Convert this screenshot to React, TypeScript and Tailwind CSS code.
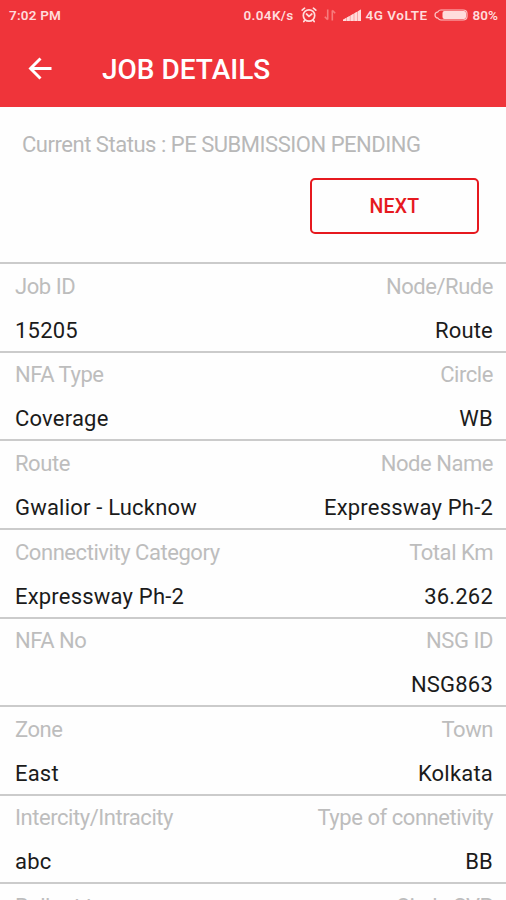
interface Field {
  label: string;
  value: string;
}

const rows: [Field, Field][] = [
  [{ label: 'Job ID', value: '15205' }, { label: 'Node/Rude', value: 'Route' }],
  [{ label: 'NFA Type', value: 'Coverage' }, { label: 'Circle', value: 'WB' }],
  [{ label: 'Route', value: 'Gwalior - Lucknow' }, { label: 'Node Name', value: 'Expressway Ph-2' }],
  [{ label: 'Connectivity Category', value: 'Expressway Ph-2' }, { label: 'Total Km', value: '36.262' }],
  [{ label: 'NFA No', value: '' }, { label: 'NSG ID', value: 'NSG863' }],
  [{ label: 'Zone', value: 'East' }, { label: 'Town', value: 'Kolkata' }],
  [{ label: 'Intercity/Intracity', value: 'abc' }, { label: 'Type of connetivity', value: 'BB' }],
  [{ label: 'Rollout type', value: '' }, { label: 'Circle SVP', value: '' }],
];

function StatusBar() {
  return (
    <div className="flex h-[30px] items-center pl-[9px] pr-2 text-[13.5px] font-semibold text-[#ffdcdc]">
      <span className="flex-1 tracking-[0.2px]">7:02 PM</span>
      <span className="tracking-[0.35px]">0.04K/s</span>
      {/* alarm */}
      <svg className="ml-[7px] h-4 w-4" viewBox="0 0 16 16" fill="none" stroke="currentColor" strokeWidth="1.7" strokeLinecap="round">
        <circle cx="8" cy="8.5" r="5.7" />
        <path d="M1.2 3.2 3.6 1.2M14.8 3.2 12.4 1.2M5.5 7 8 9.3 10.8 7M3.8 13.2 2.8 14.6M12.2 13.2 13.2 14.6" />
      </svg>
      {/* data arrows */}
      <svg className="ml-[7px] h-3 w-3 text-[#f77b7c]" viewBox="0 0 12 12" fill="none" stroke="currentColor" strokeWidth="1.6">
        <path d="M3.7 0.5v10M0.8 7.8 3.7 10.7M8.3 11.5v-10M11.2 4.2 8.3 1.3" />
      </svg>
      {/* signal */}
      <svg className="ml-[7px] h-3 w-[18px]" viewBox="0 0 18 12" fill="currentColor">
        <path d="M0 12V10.8L18 0.5V12z" fillOpacity="0.6" />
        <path d="M0 12V10.8L3 9.1v2.9zM3.8 12V8.6L6.8 6.9v5.1zM7.6 12V6.4L10.6 4.7v7.3zM11.4 12V4.3L14.2 2.7V12zM15 12V2.2L18 0.5V12z" />
      </svg>
      <span className="ml-[5px] tracking-[0.5px]">4G VoLTE</span>
      {/* battery */}
      <svg className="ml-1.5 h-3 w-[34px]" viewBox="0 0 34 12" fill="none">
        <path d="M7 1H29Q33 1 33 4.5V7.5Q33 11 29 11H7Q5 11 4 9.2 1 8.8 1 6 1 3.2 4 2.8 5 1 7 1Z" stroke="currentColor" strokeWidth="1.2" strokeOpacity="0.85" />
        <rect x="8.5" y="2" width="23.5" height="8" rx="2" fill="currentColor" />
      </svg>
      <span className="ml-[5px]">80%</span>
    </div>
  );
}

function DetailRow({ left, right }: { left: Field; right: Field }) {
  return (
    <div className="flex h-[88.6px] shrink-0 justify-between border-t-2 border-[#cbcbcb] pl-[15px] pr-[13px] pt-[7.5px] text-[22px] leading-[29px]">
      {[left, right].map((field, i) => (
        <div key={field.label} className={i === 1 ? 'text-right' : ''}>
          <div className="tracking-[-0.45px] text-[#bdbdbd]">{field.label}</div>
          <div className="mt-[15px] tracking-[0.2px] text-[#1b1b1b]">{field.value}</div>
        </div>
      ))}
    </div>
  );
}

export default function App() {
  return (
    <div className="flex h-[900px] w-[506px] flex-col overflow-hidden bg-[#fefefe] font-['Roboto',sans-serif]">
      <header className="h-[107px] shrink-0 bg-[#ef343a]">
        <StatusBar />
        <div className="flex h-[77px] items-center pl-7 pt-px">
          <button aria-label="Back" className="text-white">
            <svg className="h-6 w-6" viewBox="0 0 24 24" fill="none" stroke="currentColor" strokeWidth="2.9">
              <path d="M23.5 11.5H3M12.5 1.5 2.5 11.5 12.5 21.5" />
            </svg>
          </button>
          <h1 className="ml-[50px] pt-px text-[28px] font-medium text-white">JOB DETAILS</h1>
        </div>
      </header>

      <section className="h-[155.3px] shrink-0 pl-[22px] pr-[27px] pt-[22px]">
        <p className="pt-px text-[22px] leading-[29px] tracking-[-0.47px] text-[#b8b8b8]">
          Current Status : PE SUBMISSION PENDING
        </p>
        <div className="mt-[19px] flex justify-end">
          <button className="h-[56px] w-[169px] rounded-[5px] border-2 border-[#e6191f] pt-0.5 text-[19.5px] font-medium tracking-[0.2px] text-[#e6191f]">
            NEXT
          </button>
        </div>
      </section>

      <main>
        {rows.map(([left, right]) => (
          <DetailRow key={left.label} left={left} right={right} />
        ))}
      </main>
    </div>
  );
}
